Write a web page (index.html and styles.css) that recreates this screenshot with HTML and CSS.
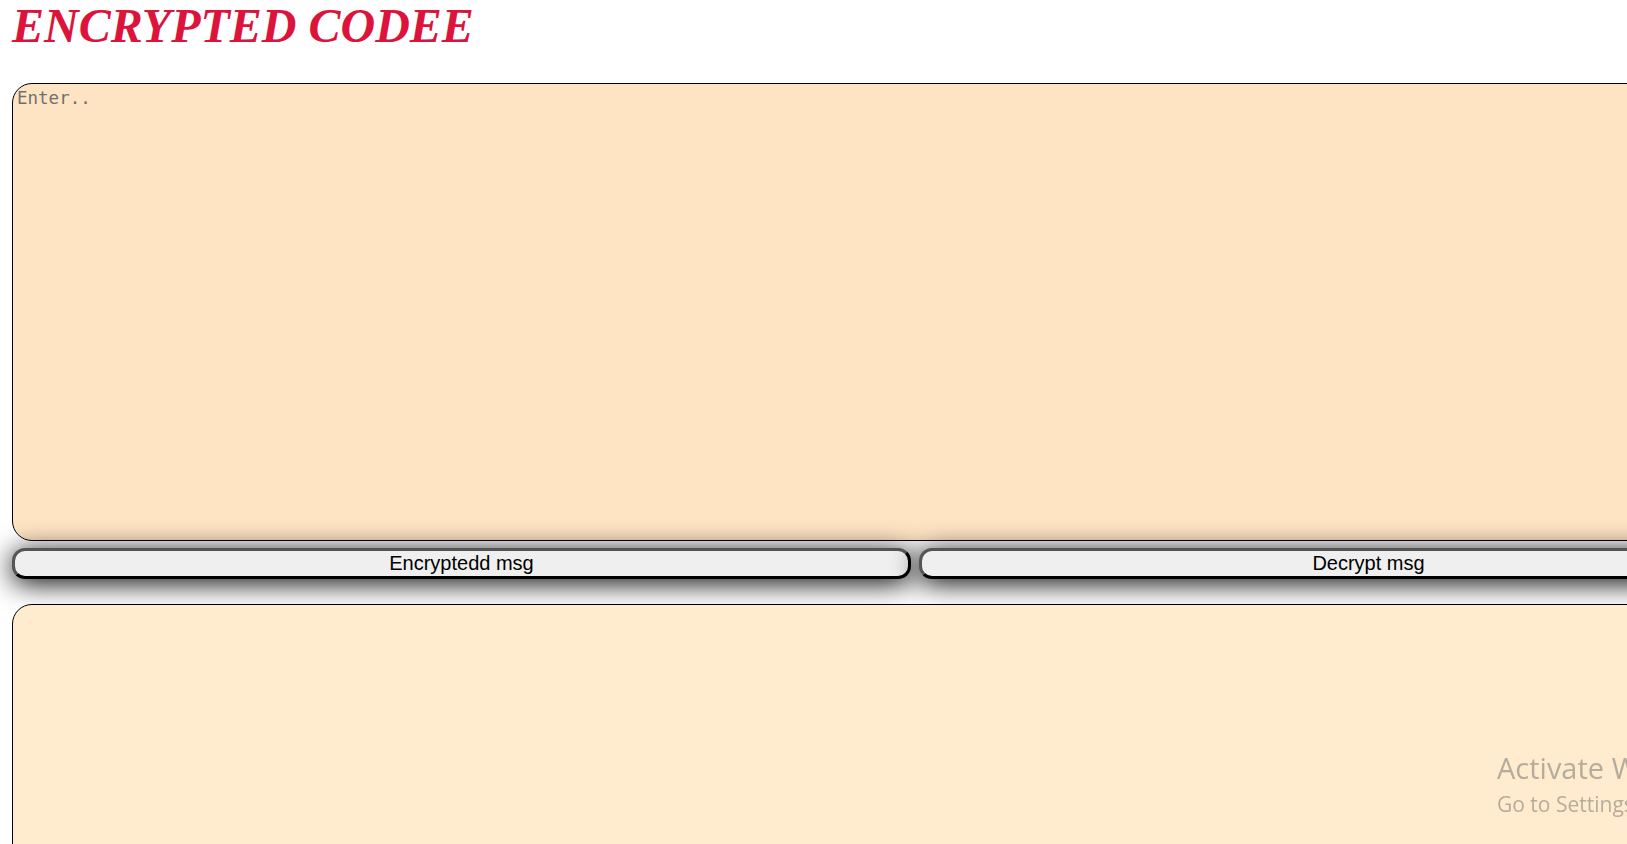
FILE: index.html
```html
<!DOCTYPE html>
<html lang="en">
<head>
<meta charset="utf-8">
<title>Encrypted Codee</title>
<link rel="stylesheet" href="styles.css">
</head>
<body>
<main class="page">
  <h1 class="title">ENCRYPTED CODEE</h1>
  <textarea class="input-box" placeholder="Enter.."></textarea>
  <div class="actions">
    <button class="action-btn" type="button">Encryptedd msg</button>
    <button class="action-btn" type="button">Decrypt msg</button>
  </div>
  <textarea class="output-box"></textarea>
</main>
<div class="watermark">
  <div class="wm-title">Activate Windows</div>
  <div class="wm-sub">Go to Settings to activate Windows.</div>
</div>
</body>
</html>
```

FILE: styles.css
```css
html, body {
  margin: 0;
  padding: 0;
  overflow: hidden;
  background: #ffffff;
}

.page {
  display: flex;
  flex-direction: column;
  align-items: flex-start;
  padding: 0 0 0 12px;
  width: 1806px;
}

.title {
  margin: 0;
  padding-top: 2px;
  font-family: "Liberation Serif", "Times New Roman", serif;
  font-style: italic;
  font-weight: bold;
  font-size: 48px;
  line-height: 48px;
  color: #dc143c;
}

.input-box,
.output-box {
  box-sizing: border-box;
  width: 1806px;
  border: 1px solid #000;
  border-radius: 20px;
  padding: 4px 4px;
  font-family: "DejaVu Sans Mono", "Liberation Mono", monospace;
  font-size: 17.5px;
  resize: both;
  outline: none;
}

.input-box {
  margin-top: 33px;
  height: 458px;
  background: #ffe4c4;
}

.input-box::placeholder {
  color: #6f6f6f;
}

.output-box {
  margin-top: 25px;
  height: 460px;
  background: #ffebcd;
}

.actions {
  display: flex;
  gap: 8px;
  margin-top: 7px;
  width: 1806px;
}

.action-btn {
  flex: 1 1 0;
  box-sizing: border-box;
  height: 31px;
  background: #efefef;
  border: 3px solid;
  border-color: #555 #000 #000 #555;
  border-radius: 13px;
  font-family: "Liberation Sans", Arial, sans-serif;
  font-size: 20px;
  color: #000;
  padding: 0;
  box-shadow: 0 4px 28px #000;
}

.watermark {
  position: fixed;
  left: 1497px;
  top: 750px;
  white-space: nowrap;
  color: rgba(110, 110, 110, 0.5);
  font-family: "Open Sans", "Noto Sans", sans-serif;
  pointer-events: none;
}

.wm-title {
  font-size: 29px;
  line-height: 36px;
}

.wm-sub {
  margin-top: 3px;
  font-size: 21px;
  line-height: 30px;
}
```
